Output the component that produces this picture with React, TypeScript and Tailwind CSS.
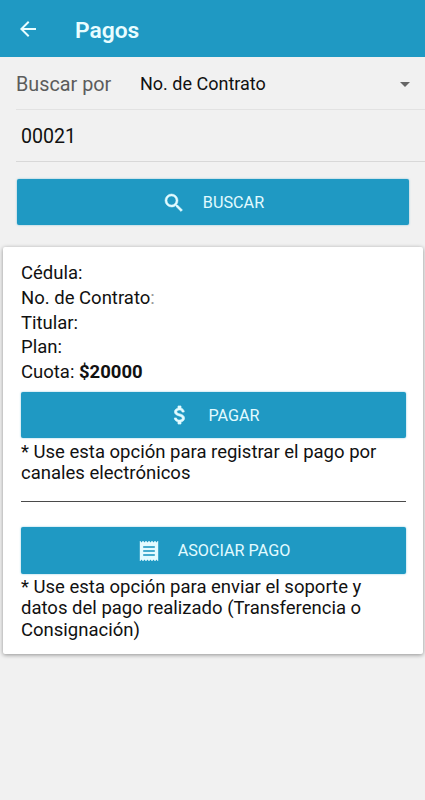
import { MdArrowBack, MdArrowDropDown, MdAttachMoney, MdReceipt, MdSearch } from 'react-icons/md';
import type { IconType } from 'react-icons';

interface ActionButtonProps {
  icon: IconType;
  label: string;
  className?: string;
  iconClassName?: string;
}

function ActionButton({ icon: Icon, label, className = '', iconClassName = '' }: ActionButtonProps) {
  return (
    <button
      className={`flex w-full items-center justify-center rounded-xs bg-[#1f99c3] pt-px text-[16.2px] text-[#e2fbff] shadow-[0_0_2px_rgba(31,153,195,0.6)] ${className}`}
    >
      <Icon className={`h-6 w-6 ${iconClassName}`} />
      <span className="ml-[17px] pt-px">{label}</span>
    </button>
  );
}

const contractFields = ['Cédula:', 'No. de Contrato', 'Titular:', 'Plan:'];

export default function App() {
  return (
    <div className="min-h-screen bg-[#f1f1f1] font-[Roboto,sans-serif] text-[#111]">
      <header className="flex h-[57px] items-center bg-[#1f99c3] pl-4 text-[#e9fdff]">
        <MdArrowBack className="h-6 w-6" />
        <h1 className="ml-[35px] mt-1.5 text-[22.8px] font-semibold">Pagos</h1>
      </header>

      <div className="ml-4 flex h-[53px] items-center border-b border-[#e2e2e2] pt-px">
        <label className="mt-0.5 w-[124px] text-[19.8px] text-[#5c5c5c]">Buscar por</label>
        <span className="flex-1 text-[18px]">No. de Contrato</span>
        <MdArrowDropDown className="mr-2 h-6 w-6 text-[#666]" />
      </div>
      <div className="ml-4 flex h-[52px] items-center border-b border-[#d8d8d8] pl-[5px] pt-0.5 text-[19.6px]">
        00021
      </div>

      <div className="pl-[17px] pr-4 pt-[17px]">
        <ActionButton
          icon={MdSearch}
          label="BUSCAR"
          className="h-[46px]"
          iconClassName="[&>path:last-child]:stroke-[0.5]"
        />
      </div>

      <section className="ml-[3px] mr-[2px] mt-[22px] h-[407px] rounded-xs bg-white pl-[18px] pr-[17px] pt-[14px] text-[18.5px] shadow-[0_1px_4px_rgba(0,0,0,0.4)]">
        <div className="leading-[24.8px]">
          {contractFields.map((field) => (
            <p key={field}>
              {field}
              {field === 'No. de Contrato' && <span className="text-[#999]">:</span>}
            </p>
          ))}
          <p>
            Cuota: <strong>$20000</strong>
          </p>
        </div>

        <ActionButton
          icon={MdAttachMoney}
          label="PAGAR"
          className="mt-[7px] h-[46px]"
          iconClassName="ml-px -mr-px [&>path:last-child]:stroke-[0.7]"
        />
        <p className="mt-1 leading-[21.5px]">
          * Use esta opción para registrar el pago por
          <br />
          canales electrónicos
        </p>
        <hr className="mt-4 border-[#4a4a4a]" />

        <ActionButton
          icon={MdReceipt}
          label="ASOCIAR PAGO"
          className="mt-[25px] h-[47px]"
          iconClassName="[&>path:last-child]:stroke-[0.4]"
        />
        <p className="mt-[3px] leading-[21.5px]">
          * Use esta opción para enviar el soporte y
          <br />
          datos del pago realizado (Transferencia o
          <br />
          Consignación)
        </p>
      </section>
    </div>
  );
}
